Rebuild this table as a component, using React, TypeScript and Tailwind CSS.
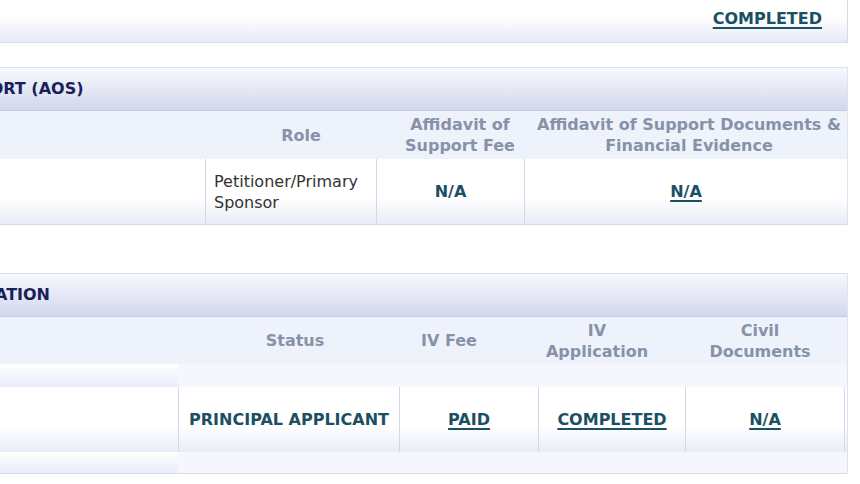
import React from 'react';

const font = { fontFamily: '"DejaVu Sans", Verdana, sans-serif' };

function LinkText({ children }: { children: React.ReactNode }) {
  return <span className="font-bold text-[#1b5063] underline underline-offset-[3px] decoration-[1.5px]">{children}</span>;
}

function SectionHeader({ title, shift }: { title: string; shift: string }) {
  return (
    <div className="h-[43px] flex items-center bg-gradient-to-b from-[#f8f9fd] to-[#d2d7ec] border-b border-[#c5cbe0] overflow-hidden">
      <span className={`font-bold text-[16px] text-[#1a1f5c] whitespace-nowrap ${shift}`}>{title}</span>
    </div>
  );
}

function App() {
  return (
    <div className="w-[860px] h-[484px] bg-white overflow-hidden text-[16px]" style={font}>
      <div className="w-[848px]">
        {/* Previous section tail */}
        <div className="h-[43px] flex items-center justify-end pr-[25px] pb-[5px] bg-gradient-to-b from-white from-40% to-[#e6e9f5] border-b border-r border-[#d6daea]">
          <LinkText>COMPLETED</LinkText>
        </div>

        {/* Affidavit of Support */}
        <div className="mt-[24px] border-t border-r border-[#dfe2ee]">
          <SectionHeader title="AFFIDAVIT OF SUPPORT (AOS)" shift="-ml-[188px]" />
          <div className="flex h-[48px] bg-[#eef2fb] font-bold text-[#8792a8] leading-[21px] text-center whitespace-nowrap">
            <div className="w-[222px]" />
            <div className="w-[158px] flex items-center justify-center">Role</div>
            <div className="w-[160px] flex items-center justify-center">Affidavit of<br />Support Fee</div>
            <div className="w-[298px] flex items-center justify-center">Affidavit of Support Documents &amp;<br />Financial Evidence</div>
          </div>
          <div className="flex h-[66px] bg-gradient-to-b from-white from-60% to-[#e9ecf7] border-b border-[#d6daea]">
            <div className="w-[205px]" />
            <div className="w-[171px] border-l border-[#d3d7e8] flex items-center pl-[8px] text-[#333] leading-[21px]">
              Petitioner/Primary<br />Sponsor
            </div>
            <div className="w-[148px] border-l border-[#d3d7e8] flex items-center justify-center font-bold text-[#1b5063]">N/A</div>
            <div className="flex-1 border-l border-[#d3d7e8] flex items-center justify-center">
              <LinkText>N/A</LinkText>
            </div>
          </div>
        </div>

        {/* Immigrant Visa Application */}
        <div className="mt-[48px] border-t border-r border-[#dfe2ee]">
          <SectionHeader title="IMMIGRANT VISA APPLICATION" shift="-ml-[228px]" />
          <div className="flex h-[47px] bg-[#eef2fb] font-bold text-[#8792a8] leading-[21px] text-center whitespace-nowrap">
            <div className="w-[190px]" />
            <div className="w-[210px] flex items-center justify-center">Status</div>
            <div className="w-[98px] flex items-center justify-center">IV Fee</div>
            <div className="w-[198px] flex items-center justify-center">IV<br />Application</div>
            <div className="w-[128px] flex items-center justify-center">Civil<br />Documents</div>
          </div>
          <div className="flex h-[23px]">
            <div className="w-[178px] bg-gradient-to-b from-white to-[#e9ecf7]" />
            <div className="flex-1 bg-[#f5f7fc]" />
          </div>
          <div className="flex h-[65px] bg-gradient-to-b from-white from-60% to-[#e9ecf7]">
            <div className="w-[178px]" />
            <div className="w-[221px] border-l border-[#d3d7e8] flex items-center justify-center font-bold text-[#1b5063] whitespace-nowrap">PRINCIPAL APPLICANT</div>
            <div className="w-[139px] border-l border-[#d3d7e8] flex items-center justify-center"><LinkText>PAID</LinkText></div>
            <div className="w-[147px] border-l border-[#d3d7e8] flex items-center justify-center"><LinkText>COMPLETED</LinkText></div>
            <div className="w-[160px] border-l border-r border-[#d3d7e8] flex items-center justify-center"><LinkText>N/A</LinkText></div>
          </div>
          <div className="flex h-[22px] border-b border-[#d6daea]">
            <div className="w-[178px] bg-gradient-to-b from-white to-[#e9ecf7]" />
            <div className="flex-1 bg-[#f5f7fc]" />
          </div>
        </div>
      </div>
    </div>
  );
}

export default App;
